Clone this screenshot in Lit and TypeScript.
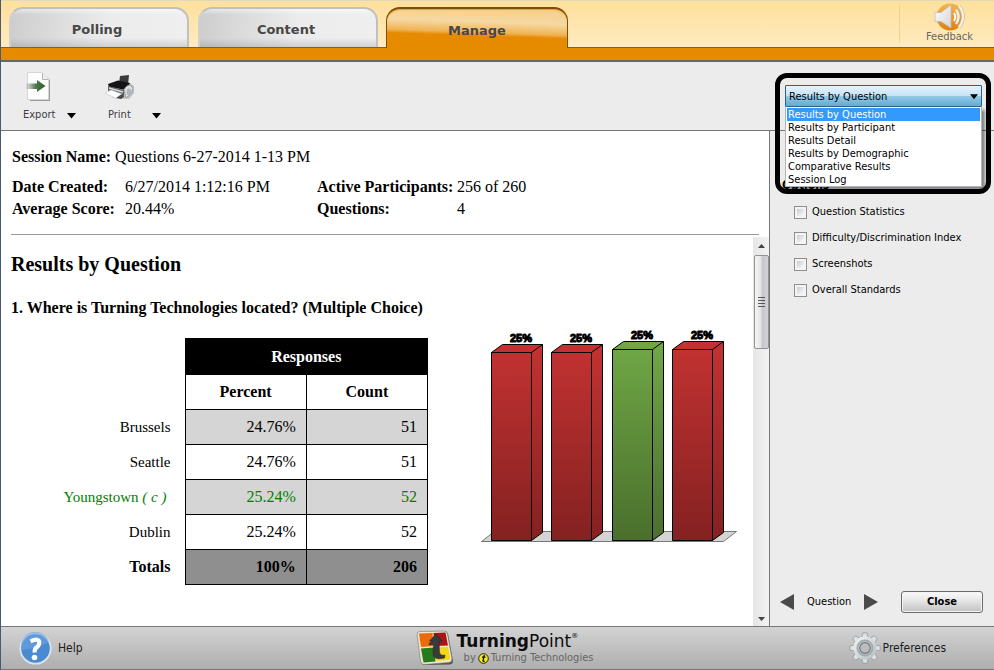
import { LitElement, html, css, svg } from "lit";
import { customElement, state } from "lit/decorators.js";
import { classMap } from "lit/directives/class-map.js";

interface Answer {
  label: string;
  percent: string;
  count: number;
  correct?: boolean;
}

const ANSWERS: Answer[] = [
  { label: "Brussels", percent: "24.76%", count: 51 },
  { label: "Seattle", percent: "24.76%", count: 51 },
  { label: "Youngstown", percent: "25.24%", count: 52, correct: true },
  { label: "Dublin", percent: "25.24%", count: 52 },
];

const REPORTS = [
  "Results by Question",
  "Results by Participant",
  "Results Detail",
  "Results by Demographic",
  "Comparative Results",
  "Session Log",
];

const OPTIONS = [
  "Question Statistics",
  "Difficulty/Discrimination Index",
  "Screenshots",
  "Overall Standards",
];

@customElement("result-chart")
class ResultChart extends LitElement {
  static styles = css`
    :host { display: block; }
    svg { display: block; overflow: visible; }
    .value { font: bold 11px "Liberation Sans", sans-serif; fill: #000; stroke: #000; stroke-width: 1; }
  `;

  private bar(a: Answer, i: number) {
    const x = 10 + i * 60 + (i > 1 ? 1 : 0);
    const y = a.count > 51 ? 21 : 24;
    const base = 212;
    const fill = a.correct ? "url(#green)" : "url(#red)";
    return svg`
      <g stroke="#000" stroke-width="1" transform="translate(.5 .5)">
        <path fill=${fill} d="M${x} ${y} l11 -8 h40 V${base - 8} l-11 8 H${x} Z"></path>
        <path fill="none" d="M${x} ${y} h40 l11 -8 M${x + 40} ${y} V${base}"></path>
      </g>
      <text class="value" x=${x + 30} y=${y - 10} text-anchor="middle">25%</text>`;
  }

  render() {
    return html`
      <svg width="257" height="215" viewBox="0 0 257 215" role="img" aria-label="Share of responses by answer">
        <defs>
          <linearGradient id="red" x1="0" y1="0" x2="0" y2="1">
            <stop offset="0" stop-color="#c43232"></stop>
            <stop offset="1" stop-color="#842121"></stop>
          </linearGradient>
          <linearGradient id="green" x1="0" y1="0" x2="0" y2="1">
            <stop offset="0" stop-color="#70a846"></stop>
            <stop offset="1" stop-color="#4a6f2c"></stop>
          </linearGradient>
        </defs>
        <path d="M.5 213.5 L13.5 203.5 H255.5 L242.5 213.5 Z" fill="#d4d4d4" stroke="#777"></path>
        ${ANSWERS.map((a, i) => this.bar(a, i))}
      </svg>`;
  }
}

@customElement("app-root")
class AppRoot extends LitElement {
  static styles = css`
    :host {
      display: flex;
      flex-direction: column;
      box-sizing: border-box;
      min-height: 100vh;
      border-left: 1px solid #4b5a70;
      background: #ececec;
      color: #1c1c1c;
      font: 11px/14px "DejaVu Sans Condensed", "DejaVu Sans", sans-serif;
    }
    * { box-sizing: border-box; }
    button, select, input { font: inherit; color: inherit; margin: 0; }
    button { background: none; border: 0; padding: 0; }
    svg { display: block; flex: none; }

    .top {
      display: flex;
      justify-content: space-between;
      height: 48px;
      padding-left: 8px;
      border-top: 1px solid #e3d9b8;
      border-bottom: 1px solid #6d6250;
      background: linear-gradient(#ffe09c, #ffebc0);
    }
    .tabs { display: flex; gap: 9px; padding-top: 6px; }
    .tab {
      width: 180px;
      height: 40px;
      padding: 4px 4px 0 0;
      border: 2px solid #c0c0c0;
      border-bottom: 0;
      border-left-color: #d0d0d0;
      border-radius: 14px 14px 0 0;
      background:
        linear-gradient(rgba(255,255,255,.5), rgba(255,255,255,0) 15%, rgba(0,0,0,0) 75%, rgba(90,90,90,.2)),
        linear-gradient(100deg, #cdcdcd, #ececec 55%, #efefef);
      font-family: "DejaVu Sans", sans-serif;
      font-size: 13px;
      font-weight: bold;
      color: #474747;
    }
    .tab.active {
      width: 182px;
      height: 41px;
      margin-left: -1px;
      padding-right: 0;
      border: 1px solid #7a4f08;
      border-top-width: 2px;
      border-bottom: 0;
      background: linear-gradient(182deg, #f4cf8d, #f6d8a2 35%, #efb455 58%, #e68a00 66%, #e68a00);
      box-shadow: inset 0 1px 1px #f0a020;
    }
    .feedback {
      display: flex;
      flex-direction: column;
      align-items: center;
      justify-content: space-between;
      width: 95px;
      margin: 4px 0 5px;
      padding: 0 0 0 5px;
      border-left: 1px solid #ecd292;
      color: #666;
    }
    .feedback span { line-height: 10px; }
    .feedback svg { margin-top: -2px; }
    .band { height: 14px; background: #e68a00; border-bottom: 2px solid #696666; }

    .body { display: flex; flex: 1; }
    .left { display: flex; flex-direction: column; flex: 1; min-width: 0; }
    .side {
      display: flex;
      flex-direction: column;
      width: 225px;
    }
    .toolbar {
      display: flex;
      align-items: flex-start;
      gap: 26px;
      height: 69px;
      padding: 9px 0 0 22px;
      border-bottom: 1px solid #777;
      color: #3c3c46;
    }
    .tool { display: flex; align-items: flex-end; gap: 12px; }
    .tool button { display: flex; flex-direction: column; align-items: center; gap: 3px; }
    .tool .more { padding-bottom: 3px; }
    .tool.print { gap: 16px; }

    .report {
      display: flex;
      flex-direction: column;
      flex: 1;
      background: #fff;
      color: #000;
      font: 16px/22px "Liberation Serif", serif;
    }
    .session { padding: 15px 10px 0; }
    .session p { margin: 0 0 8px 1px; }
    .facts { display: grid; grid-template-columns: 113px 192px 140px 1fr; margin: 0 0 14px 1px; }
    .facts dt { font-weight: bold; }
    .facts dd { margin: 0; }
    .session hr { margin: 0; border: 0; border-top: 1px solid #999; }
    .scroll { display: flex; flex: 1; }
    .content { flex: 1; padding: 18px 0 20px 10px; }
    h2 { margin: 0 0 22px; font-size: 20px; line-height: 22px; }
    h3 { margin: 0 0 9px; font-size: 16px; line-height: 22px; }
    .result { display: flex; gap: 53px; align-items: flex-start; }
    table { border-collapse: collapse; margin-top: 10px; table-layout: fixed; width: 417px; }
    .c-label { width: 174px; }
    th, td { height: 35px; padding: 0 10px; text-align: right; }
    .box { border: 1px solid #000; }
    thead th { text-align: center; }
    thead .title { height: 36px; background: #000; color: #fff; }
    tbody th { padding-right: 14px; font-weight: normal; font-size: 15px; }
    tbody tr:nth-child(odd) .box { background: #d5d5d5; }
    .correct { color: #008000; }
    .correct th { padding-right: 18px; }
    tfoot th, tfoot td { font-weight: bold; }
    tfoot th { padding-right: 14px; }
    tfoot .box { background: #8f8f8f; }

    .track {
      display: flex;
      flex-direction: column;
      align-items: center;
      width: 16px;
      margin-top: 2px;
      padding: 7px 0 5px;
      background: linear-gradient(90deg, #e6e6e6, #f2f2f2);
    }
    .thumb {
      display: grid;
      place-content: center;
      gap: 2px;
      width: 15px;
      height: 94px;
      margin: 7px 0 auto;
      border: 1px solid #929292;
      border-radius: 2px;
      background: linear-gradient(90deg, #f6f6f6, #e4e4e8 45%, #c6c6cc 55%, #d2d2d8);
    }
    .thumb i { width: 7px; height: 1px; background: #555; }

    .picker {
      position: relative;
      height: 69px;
      border-bottom: 1px solid #777;
      padding: 23px 12px 0 16px;
    }
    .picker select {
      display: block;
      appearance: none;
      width: 100%;
      height: 22px;
      padding: 1px 3px 0;
      border: 1px solid #2c628b;
      border-radius: 1px;
      background: linear-gradient(#e6f3fb, #c6e3f4 48%, #93c8e6 52%, #62abd4);
      color: #000;
    }
    .picker .arrow { position: absolute; right: 16px; top: 32px; }
    .list {
      position: absolute;
      z-index: 1;
      top: 45px;
      left: 16px;
      right: 12px;
      margin: 0;
      padding: 1px 1px 0;
      list-style: none;
      border: 1px solid #b4b4bc;
      border-top: 0;
      background: #fff;
      box-shadow: 3px 3px 3px rgba(0,0,0,.45);
      line-height: 13px;
      color: #000;
    }
    .list li { padding-left: 1px; }
    .list li.chosen { background: #3399ff; color: #fff; }
    .callout {
      position: absolute;
      z-index: 2;
      top: 11px;
      left: 6px;
      right: 3px;
      height: 121px;
      border: 5px solid #000;
      border-radius: 12px;
      pointer-events: none;
    }
    .options {
      display: flex;
      flex-direction: column;
      flex: 1;
      border-left: 1px solid #777;
      padding: 47px 11px 13px 10px;
    }
    fieldset { display: flex; flex-direction: column; gap: 12px; border: 0; margin: 0; padding: 0 0 0 2px; color: #000; }
    legend { padding: 0; margin-bottom: 13px; font-size: 12px; font-weight: bold; }
    .check { display: flex; align-items: center; gap: 5px; padding-left: 12px; line-height: 14px; }
    .check input {
      appearance: none;
      width: 13px;
      height: 13px;
      border: 1px solid #8e8f8f;
      background: linear-gradient(135deg, #b9c0c8, #f6f6f6 75%);
      box-shadow: inset 0 0 0 2px #f4f4f4;
    }
    .check input:checked { background: #3399ff; }
    .nav {
      display: flex;
      align-items: center;
      justify-content: space-between;
      margin-top: auto;
      color: #000;
    }
    .pager { display: flex; align-items: center; gap: 13px; }
    .close {
      width: 82px;
      height: 22px;
      border: 1px solid #6c6c6c;
      border-radius: 3px;
      background: linear-gradient(#fafafa, #e2e2e2 50%, #c0c0c0);
      box-shadow: inset 0 0 0 1px #f4f4f4;
      font-weight: bold;
    }

    .footer {
      display: grid;
      grid-template-columns: 1fr auto 1fr;
      align-items: center;
      height: 44px;
      padding-left: 14px;
      border-top: 1px solid #777;
      border-bottom: 1px solid #777;
      background: linear-gradient(#d3d3d3, #aeaeae);
      font-size: 12px;
    }
    .footer button { display: flex; align-items: center; justify-self: start; gap: 6px; padding-left: 4px; }
    .footer .prefs { justify-self: end; gap: 2px; padding-right: 48px; }
    .brand { display: flex; align-items: center; gap: 3px; }
    .name { display: flex; font-family: "DejaVu Sans", sans-serif; font-size: 17px; line-height: 20px; color: #0c0c0c; }
    .name sup { font-size: 7px; line-height: 10px; }
    .by { display: flex; align-items: center; gap: 2px; font-size: 11px; line-height: 14px; color: #666; padding-left: 7px; }
  `;

  @state() private report = REPORTS[0];

  private caret(size = 9) {
    return html`<svg width=${size} height="6" viewBox="0 0 9 6" aria-hidden="true"><path d="M0 0H9L4.5 5.5Z" fill="#000"></path></svg>`;
  }

  private exportIcon() {
    return html`<svg width="32" height="34" viewBox="0 0 32 34" aria-hidden="true">
      <defs><linearGradient id="arw"><stop offset="0" stop-color="#4d7a4a" stop-opacity=".1"></stop><stop offset=".5" stop-color="#4d7a4a"></stop><stop offset="1" stop-color="#2f5c26"></stop></linearGradient></defs>
      <path d="M7 4H21L27 9V30H7Z" fill="#777" opacity=".7"></path>
      <path d="M4.500 1.500H19L25.500 8V28.500H4.500Z" fill="#fdfdfd" stroke="#d6d6d6"></path>
      <path d="M19.500 2V8.500H25" fill="#eee" stroke="#b4b4b4"></path>
      <path d="M3 12.500H14V9L22.500 15L14 21V18H3Z" fill="url(#arw)"></path>
    </svg>`;
  }

  private printIcon() {
    return html`<svg width="34" height="34" viewBox="0 0 34 34" aria-hidden="true">
      <path d="M10 27L27 28L32 22V15L28 12Z" fill="#888" opacity=".4"></path>
      <path d="M18 5L27 4L26 14L17 13Z" fill="#3a3a3c"></path>
      <path d="M6 13L16 9.500L28 12L24 19L7 16Z" fill="#141416"></path>
      <path d="M6 15L22 19L22 26L6 21Z" fill="#5f6266"></path>
      <path d="M7 17L21 21" stroke="#d9dcde" stroke-width="1.500"></path>
      <path d="M22 19Q24 14 29 14Q32 17 30 22L24 27Z" fill="#dfe2e4" stroke="#9a9da0"></path>
      <ellipse cx="27" cy="21" rx="2.500" ry="3.500" fill="#b2b6b9"></ellipse>
      <path d="M3 22L9 19L20 23L14 27.500Z" fill="#fff" stroke="#c8c8c8" stroke-width=".7"></path>
      <path d="M14 27L20 23L22 26L19 28Z" fill="#4a4a4c"></path>
    </svg>`;
  }

  private speakerIcon() {
    return html`<svg width="32" height="28" viewBox="0 0 32 28" aria-hidden="true">
      <defs><linearGradient id="spk" x1="0" y1="0" x2="0" y2="1"><stop offset="0" stop-color="#f3b64c"></stop><stop offset="1" stop-color="#de7f10"></stop></linearGradient>
      <linearGradient id="cone" x1="0" y1="0" x2="1" y2="1"><stop offset="0" stop-color="#fff"></stop><stop offset="1" stop-color="#d4d4d4"></stop></linearGradient></defs>
      <circle cx="16" cy="14" r="13.500" fill="url(#spk)"></circle>
      <path d="M1 9.500H7L17 2V25L7 18.500H1Z" fill="url(#cone)" stroke="#bbb" stroke-width=".7"></path>
      <path d="M20 10Q22.500 14 20 18" fill="none" stroke="#fff" stroke-width="2"></path>
      <path d="M22 6.500Q27 13.500 22 21" fill="none" stroke="#eee" stroke-width="2.500"></path>
      <path d="M25 3Q33 13 25 24.500" fill="none" stroke="#c9b899" stroke-width="3.500"></path>
      <path d="M25 3Q33 13 25 24.500" fill="none" stroke="#f5f2ee" stroke-width="2.200"></path>
    </svg>`;
  }

  private helpIcon() {
    return html`<svg width="33" height="33" viewBox="0 0 33 33" aria-hidden="true">
      <circle cx="16.500" cy="16.500" r="15.200" fill="#4a8ad2" stroke="#dce3ea" stroke-width="1.800"></circle>
      <path d="M2.500 18Q16 17 30 10A14.300 14.300 0 0 0 2.500 18Z" fill="#6fa5df" opacity=".6"></path>
      <path d="M11.500 9.200Q20.500 5.500 20.200 11Q20 14 17 16Q15.500 17.200 15.700 20.500" fill="none" stroke="#fff" stroke-width="4.200"></path>
      <circle cx="15.500" cy="25.500" r="2.800" fill="#fff"></circle>
    </svg>`;
  }

  private gearIcon() {
    const teeth = [0, 45, 90, 135, 180, 225, 270, 315];
    return html`<svg width="32" height="32" viewBox="0 0 32 32" aria-hidden="true">
      <defs><linearGradient id="gear" x1="0" y1="0" x2="1" y2="1"><stop offset="0" stop-color="#f4f6f7"></stop><stop offset="1" stop-color="#b4babe"></stop></linearGradient></defs>
      ${teeth.map((t) => svg`<path transform="rotate(${t} 16 16)" d="M12.500 7L14 .8H18L19.500 7Z" fill="#dde1e4" stroke="#80868a" stroke-width=".6"></path>`)}
      <circle cx="16" cy="16" r="11.500" fill="url(#gear)"></circle>
      <circle cx="16" cy="16" r="7.500" fill="none" stroke="#a4abaf" stroke-width="2"></circle>
      <circle cx="16" cy="16" r="5.300" fill="#bcbcbc" stroke="#70767a" stroke-width="1.200"></circle>
    </svg>`;
  }

  private brandIcon() {
    return html`<svg width="38" height="36" viewBox="0 0 38 36" aria-hidden="true">
      <path d="M3 5Q2 2 5 2L28 1Q31 1 32 4L37 31Q37 34 34 34.500L9 35Q5 35 5 32Z" fill="#555"></path>
      <path d="M1 4Q1 1.500 4 1.500L28 1Q31 1 31.500 4L36 29Q36 32 33 32.500L8 34.500Q5 34.500 4.500 31Z" fill="#efe6c8" stroke="#777" stroke-width=".6"></path>
      <path d="M3 3.500L16.500 3L17.500 16L5 17Z" fill="#ec6a0c"></path>
      <path d="M17.500 3L29.500 2.500L32 15.500L18.500 16Z" fill="#a8141c"></path>
      <path d="M5 18.500L18 17.500L19.500 31.500L7.500 32.500Z" fill="#247a1c"></path>
      <path d="M19 17.500L32 17L34.500 29.500L20.500 31Z" fill="#f2d81c"></path>
      <path d="M20 4L26 11H23L23.500 22Q24 26 29 25L28.500 28Q17 31 17 23L17.500 14.500L13 15Q13 12 16.500 11H13.500Z" fill="#3a3a3a" stroke="#222" stroke-width=".5"></path>
    </svg>`;
  }

  render() {
    return html`
      <header class="top">
        <nav class="tabs" role="tablist">
          ${["Polling", "Content", "Manage"].map((name) => html`
            <button role="tab" aria-selected=${name === "Manage"} class=${classMap({ tab: true, active: name === "Manage" })}>${name}</button>`)}
        </nav>
        <button class="feedback">${this.speakerIcon()}<span>Feedback</span></button>
      </header>
      <div class="band"></div>

      <div class="body">
        <main class="left">
          <div class="toolbar">
            <div class="tool">
              <button>${this.exportIcon()}<span>Export</span></button>
              <button class="more" aria-label="Export choices">${this.caret()}</button>
            </div>
            <div class="tool print">
              <button>${this.printIcon()}<span>Print</span></button>
              <button class="more" aria-label="Print choices">${this.caret()}</button>
            </div>
          </div>

          <section class="report">
            <div class="session">
              <p><b>Session Name:</b> Questions 6-27-2014 1-13 PM</p>
              <dl class="facts">
                <dt>Date Created:</dt><dd>6/27/2014 1:12:16 PM</dd>
                <dt>Active Participants:</dt><dd>256 of 260</dd>
                <dt>Average Score:</dt><dd>20.44%</dd>
                <dt>Questions:</dt><dd>4</dd>
              </dl>
              <hr>
            </div>
            <div class="scroll">
              <div class="content">
                <h2>Results by Question</h2>
                <h3>1. Where is Turning Technologies located? (Multiple Choice)</h3>
                <div class="result">
                  <table>
                    <colgroup><col class="c-label"><col><col></colgroup>
                    <thead>
                      <tr><td></td><th class="box title" colspan="2">Responses</th></tr>
                      <tr><td></td><th class="box">Percent</th><th class="box">Count</th></tr>
                    </thead>
                    <tbody>
                      ${ANSWERS.map((a) => html`
                        <tr class=${classMap({ correct: !!a.correct })}>
                          <th scope="row">${a.label}${a.correct ? html` <i>( c )</i>` : ""}</th>
                          <td class="box">${a.percent}</td><td class="box">${a.count}</td>
                        </tr>`)}
                    </tbody>
                    <tfoot>
                      <tr><th scope="row">Totals</th><td class="box">100%</td><td class="box">206</td></tr>
                    </tfoot>
                  </table>
                  <result-chart></result-chart>
                </div>
              </div>
              <div class="track" aria-hidden="true">
                <svg width="7" height="4" viewBox="0 0 7 4"><path d="M0 4L3.500 0L7 4Z" fill="#444"></path></svg>
                <div class="thumb"><i></i><i></i><i></i><i></i></div>
                <svg width="7" height="4" viewBox="0 0 7 4"><path d="M0 0L3.500 4L7 0Z" fill="#444"></path></svg>
              </div>
            </div>
          </section>
        </main>

        <aside class="side">
          <div class="picker">
            <select aria-label="Report" @change=${(e: Event) => (this.report = (e.target as HTMLSelectElement).value)}>
              ${REPORTS.map((r) => html`<option ?selected=${r === this.report}>${r}</option>`)}
            </select>
            <span class="arrow">${this.caret(8)}</span>
            <ul class="list" role="listbox" aria-label="Reports">
              ${REPORTS.map((r) => html`
                <li role="option" aria-selected=${r === this.report} class=${classMap({ chosen: r === this.report })} @click=${() => (this.report = r)}>${r}</li>`)}
            </ul>
            <div class="callout"></div>
          </div>
          <div class="options">
            <fieldset>
              <legend>Options</legend>
              ${OPTIONS.map((o) => html`<label class="check"><input type="checkbox">${o}</label>`)}
            </fieldset>
            <div class="nav">
              <div class="pager">
                <button aria-label="Previous question"><svg width="14" height="16" viewBox="0 0 14 16"><path d="M14 0V16L0 8Z" fill="#4a4a4a"></path></svg></button>
                <span>Question</span>
                <button aria-label="Next question"><svg width="14" height="16" viewBox="0 0 14 16"><path d="M0 0V16L14 8Z" fill="#4a4a4a"></path></svg></button>
              </div>
              <button class="close">Close</button>
            </div>
          </div>
        </aside>
      </div>

      <footer class="footer">
        <button>${this.helpIcon()}Help</button>
        <div class="brand">
          ${this.brandIcon()}
          <div>
            <div class="name"><b>Turning</b>Point<sup>®</sup></div>
            <div class="by">by
              <svg width="11" height="11" viewBox="0 0 11 11" aria-hidden="true"><circle cx="5.500" cy="5.500" r="4.800" fill="#f4ea1e" stroke="#222"></circle><path d="M6.300 2L5 7.500Q5 8.800 6.800 8M4 4.200H7.500" fill="none" stroke="#111" stroke-width="1.300"></path></svg>
              Turning Technologies</div>
          </div>
        </div>
        <button class="prefs">${this.gearIcon()}Preferences</button>
      </footer>
    `;
  }
}
